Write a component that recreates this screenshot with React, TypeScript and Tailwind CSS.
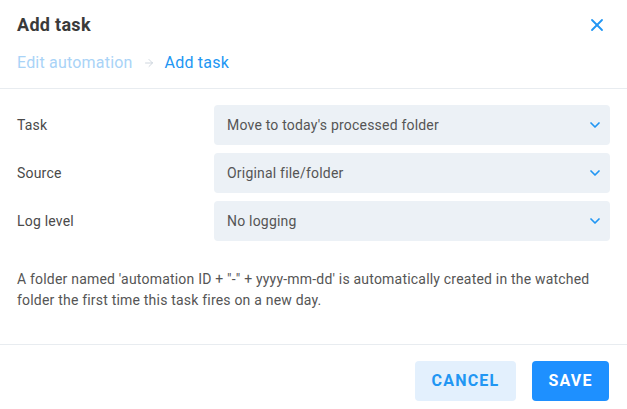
import { X, ChevronDown, ArrowRight } from 'lucide-react';

const fields = [
  { label: 'Task', value: "Move to today's processed folder" },
  { label: 'Source', value: 'Original file/folder' },
  { label: 'Log level', value: 'No logging' },
];

export default function App() {
  return (
    <div className="h-[409px] w-[627px] bg-white font-['Roboto',sans-serif] tracking-[0.2px]">
      {/* Header */}
      <div className="border-b border-[#e8ecf0] px-[17px]">
        <div className="flex h-[48px] items-center justify-between pt-[1px]">
          <h1 className="text-[18px] font-bold tracking-[0.3px] text-[#3a3a3a]">Add task</h1>
          <button className="mr-[3px] text-[#2196f3]">
            <X size={20} strokeWidth={2.2} />
          </button>
        </div>
        <div className="flex h-[40px] items-center gap-[10px] pb-[10px] text-[16px] tracking-[0.2px]">
          <span className="text-[#a9d3f7]">Edit automation</span>
          <ArrowRight size={12} strokeWidth={1.6} className="text-[#c3ccd6]" />
          <span className="text-[#2196f3]">Add task</span>
        </div>
      </div>

      {/* Body */}
      <div className="border-b border-[#e8ecf0] px-[17px] pb-[33px] pt-[16px]">
        <div className="flex flex-col gap-[8px]">
          {fields.map((f) => (
            <div key={f.label} className="flex items-center">
              <div className="w-[197px] text-[14px] text-[#4a4a4a]">{f.label}</div>
              <div className="flex h-[40px] flex-1 items-center justify-between rounded-[4px] bg-[#ecf1f6] pl-[13px] pr-[7px] text-[14px] text-[#555]">
                <span>{f.value}</span>
                <ChevronDown size={16} strokeWidth={2.6} className="text-[#2196f3]" />
              </div>
            </div>
          ))}
        </div>
        <p className="mt-[28px] text-[14px] leading-[21px] text-[#555]">
          A folder named 'automation ID + "-" + yyyy-mm-dd' is automatically created in the watched folder the first time this task fires on a new day.
        </p>
      </div>

      {/* Footer */}
      <div className="flex justify-end gap-[16px] px-[18px] pt-[16px]">
        <button className="h-[40px] w-[101px] rounded-[4px] bg-[#e3f0fd] text-[16px] font-bold tracking-[1.2px] text-[#2196f3]">
          CANCEL
        </button>
        <button className="h-[40px] w-[77px] rounded-[4px] bg-[#1e90ff] text-[16px] font-bold tracking-[1.2px] text-white">
          SAVE
        </button>
      </div>
    </div>
  );
}
